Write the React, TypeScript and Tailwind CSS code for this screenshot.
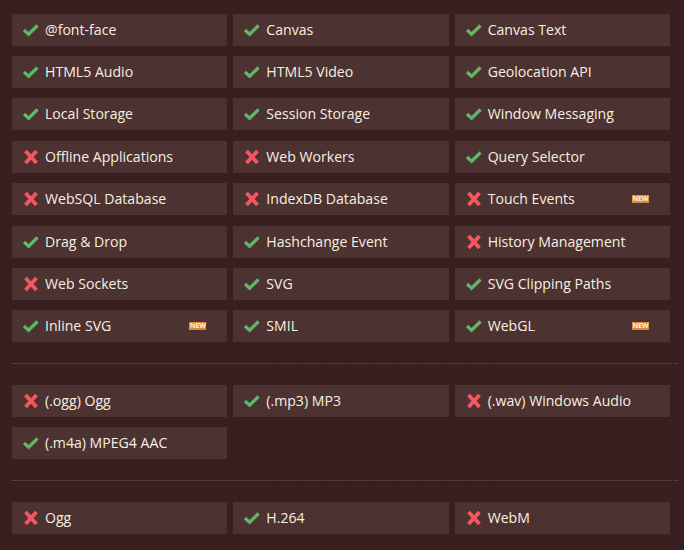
const A: [string, boolean, boolean?][] = [
  ["@font-face", true], ["Canvas", true], ["Canvas Text", true],
  ["HTML5 Audio", true], ["HTML5 Video", true], ["Geolocation API", true],
  ["Local Storage", true], ["Session Storage", true], ["Window Messaging", true],
  ["Offline Applications", false], ["Web Workers", false], ["Query Selector", true],
  ["WebSQL Database", false], ["IndexDB Database", false], ["Touch Events", false, true],
  ["Drag & Drop", true], ["Hashchange Event", true], ["History Management", false],
  ["Web Sockets", false], ["SVG", true], ["SVG Clipping Paths", true],
  ["Inline SVG", true, true], ["SMIL", true], ["WebGL", true, true],
];
const B: [string, boolean, boolean?][] = [
  ["(.ogg) Ogg", false], ["(.mp3) MP3", true], ["(.wav) Windows Audio", false], ["(.m4a) MPEG4 AAC", true],
];
const C: [string, boolean, boolean?][] = [["Ogg", false], ["H.264", true], ["WebM", false]];

function Check() {
  return (
    <svg width="18" height="14" viewBox="0 0 18 14" className="shrink-0">
      <path d="M2 7 L6.6 11.2 L15.5 2.5" fill="none" stroke="#5fb866" strokeWidth="3.2" />
    </svg>
  );
}
function Cross() {
  return (
    <svg width="18" height="14" viewBox="0 0 18 14" className="shrink-0">
      <path d="M3.5 1 L14.5 13 M14.5 1 L3.5 13" fill="none" stroke="#f5565f" strokeWidth="3.8" />
    </svg>
  );
}
function Item({ t }: { t: [string, boolean, boolean?] }) {
  return (
    <div className="h-8 bg-[#4c3230] flex items-center pl-[10px] pr-[21px]">
      {t[1] ? <Check /> : <Cross />}
      <span className="ml-[5px] flex-1 text-[14.1px] leading-[30px] text-[#f7f0e0] whitespace-nowrap">{t[0]}</span>
      {t[2] && (
        <span className="w-[17px] text-center text-[7px] leading-[8px] font-bold text-[#fff3d0] bg-[#d9893a] tracking-[-0.2px]">NEW</span>
      )}
    </div>
  );
}
function Grid({ items }: { items: [string, boolean, boolean?][] }) {
  return (
    <div className="grid grid-cols-3 gap-x-[6px] gap-y-[10.4px]">
      {items.map((t) => <Item key={t[0]} t={t} />)}
    </div>
  );
}
function Divider() {
  return <div className="border-t border-dotted border-[#7f4a4c] -mr-[8px]" />;
}
export default function App() {
  return (
    <div className="w-[684px] h-[550px] overflow-hidden bg-[#3a1f20] bg-[repeating-linear-gradient(90deg,#0000_0,#0000_2px,#00000008_2px,#00000008_3px)] pl-3 pr-[14px] pt-[13.6px] font-['Open_Sans',sans-serif] flex flex-col">
      <Grid items={A} />
      <div className="mt-[21px] mb-[20.6px]"><Divider /></div>
      <Grid items={B} />
      <div className="mt-[21px] mb-[20.6px]"><Divider /></div>
      <Grid items={C} />
    </div>
  );
}
